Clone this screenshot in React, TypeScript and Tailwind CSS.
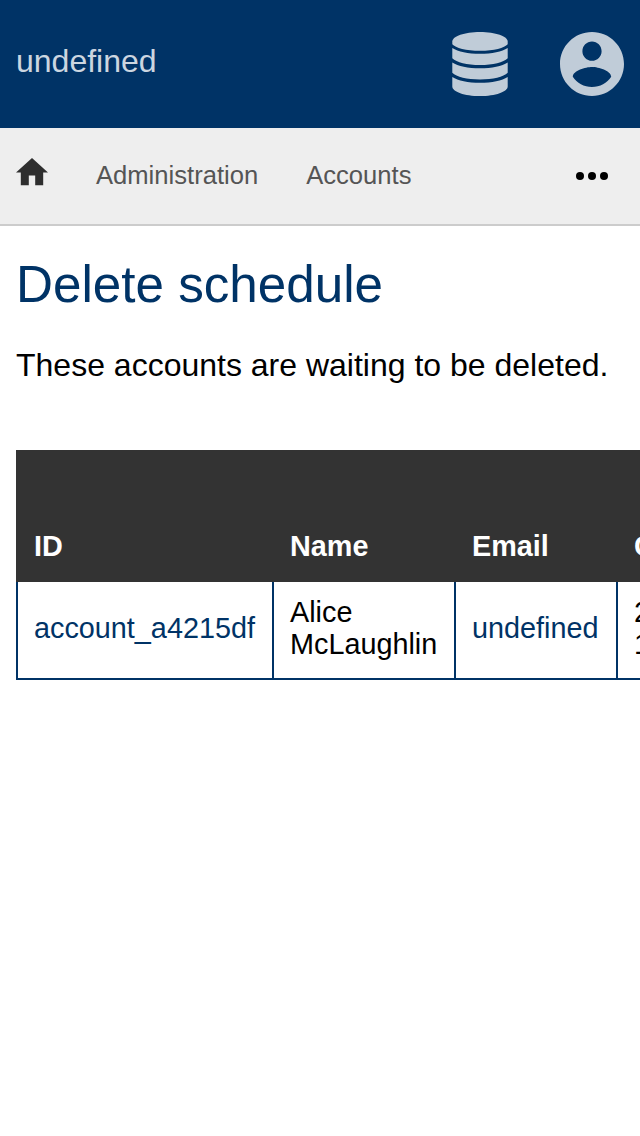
import type { ReactNode } from "react";

function DatabaseIcon() {
  return (
    <svg className="h-16 w-14" viewBox="0 0 56 64" fill="currentColor" aria-hidden="true">
      <path d="M28 0C12.500 0 .3 4.300 .3 9.600v2.600C3.500 16 14 18.700 28 18.700S52.500 16 55.700 12.200V9.600C55.700 4.300 43.500 0 28 0z" />
      <path d="M.3 16C6 19.700 16 21.800 28 21.800s22-2.100 27.700-5.800v10.200C51.500 30.300 41 33 28 33S4.500 30.300 .3 26.200z" />
      <path d="M.3 30.500C6 34.200 16 36.300 28 36.300s22-2.100 27.700-5.800v10.200C51.500 44.800 41 47.400 28 47.400S4.500 44.800 .3 40.700z" />
      <path d="M.3 45C6 48.700 16 50.800 28 50.800s22-2.100 27.700-5.800v9.400C55.700 59.700 43.500 64 28 64S.3 59.700 .3 54.400z" />
    </svg>
  );
}

function AccountIcon() {
  return (
    <svg className="size-16" viewBox="2 2 20 20" fill="currentColor" aria-hidden="true">
      <path d="M12 2C6.48 2 2 6.48 2 12s4.48 10 10 10 10-4.48 10-10S17.52 2 12 2zm0 3c1.66 0 3 1.34 3 3s-1.34 3-3 3-3-1.34-3-3 1.34-3 3-3zm0 14.2c-2.5 0-4.71-1.28-6-3.22.03-1.99 4-3.08 6-3.08 1.99 0 5.97 1.09 6 3.08-1.29 1.94-3.5 3.22-6 3.22z" />
    </svg>
  );
}

function HomeIcon() {
  return (
    <svg className="h-[27.2px] w-8" viewBox="2 3 20 17" fill="currentColor" aria-hidden="true">
      <path d="M10 20v-6h4v6h5v-8h3L12 3 2 12h3v8z" />
    </svg>
  );
}

function MoreIcon() {
  return (
    <svg className="h-2 w-8" viewBox="0 0 32 8" fill="currentColor" aria-hidden="true">
      <circle cx="4" cy="4" r="4" />
      <circle cx="16" cy="4" r="4" />
      <circle cx="28" cy="4" r="4" />
    </svg>
  );
}

function HeaderCell({ children }: { children: ReactNode }) {
  return (
    <th className="h-[130px] border-2 border-[#333] bg-[#333] px-4 pt-4 pb-[18px] text-left align-bottom font-bold text-white">
      {children}
    </th>
  );
}

function Cell({ children }: { children: ReactNode }) {
  return <td className="h-[98px] border-2 border-[#003366] px-4 pt-3.5 pb-[18px] align-middle">{children}</td>;
}

export default function App() {
  return (
    <div className="h-[1136px] w-[640px] overflow-hidden bg-white font-['Liberation_Sans',Arial,sans-serif] text-black">
      <header className="flex h-32 items-center justify-between bg-[#003366] px-4 text-[#c0ccd8]">
        <span className="pb-1.5 text-[32px] leading-10 text-[#ccd6e0]">undefined</span>
        <div className="flex items-center gap-[52px]">
          <DatabaseIcon />
          <AccountIcon />
        </div>
      </header>

      <nav className="flex h-[98px] items-center border-b-2 border-[#ccc] bg-[#eee] pr-8 pl-4 text-[25.6px] leading-8 text-[#555]">
        <span className="pb-2 text-[#2e2e2e]">
          <HomeIcon />
        </span>
        <a className="ml-12 pb-0.5">Administration</a>
        <a className="ml-12 pb-0.5">Accounts</a>
        <span className="ml-auto text-black">
          <MoreIcon />
        </span>
      </nav>

      <main className="px-4 pt-7">
        <h1 className="text-[51.2px] leading-[61px] text-[#003366]">Delete schedule</h1>
        <p className="mt-[30px] text-[32px] leading-10 whitespace-nowrap">These accounts are waiting to be deleted.</p>
        <table className="mt-[65px] w-[850px] table-fixed border-collapse text-[28.8px] leading-8">
          <colgroup>
            <col className="w-[256px]" />
            <col className="w-[182px]" />
            <col className="w-[162px]" />
            <col />
          </colgroup>
          <thead>
            <tr>
              <HeaderCell>ID</HeaderCell>
              <HeaderCell>Name</HeaderCell>
              <HeaderCell>Email</HeaderCell>
              <HeaderCell>Created</HeaderCell>
            </tr>
          </thead>
          <tbody>
            <tr>
              <Cell>
                <a className="text-[#003366]">account_a4215df</a>
              </Cell>
              <Cell>Alice McLaughlin</Cell>
              <Cell>
                <a className="text-[#003366]">undefined</a>
              </Cell>
              <Cell>
                2022-01-01
                <br />
                12:00
              </Cell>
            </tr>
          </tbody>
        </table>
      </main>
    </div>
  );
}
